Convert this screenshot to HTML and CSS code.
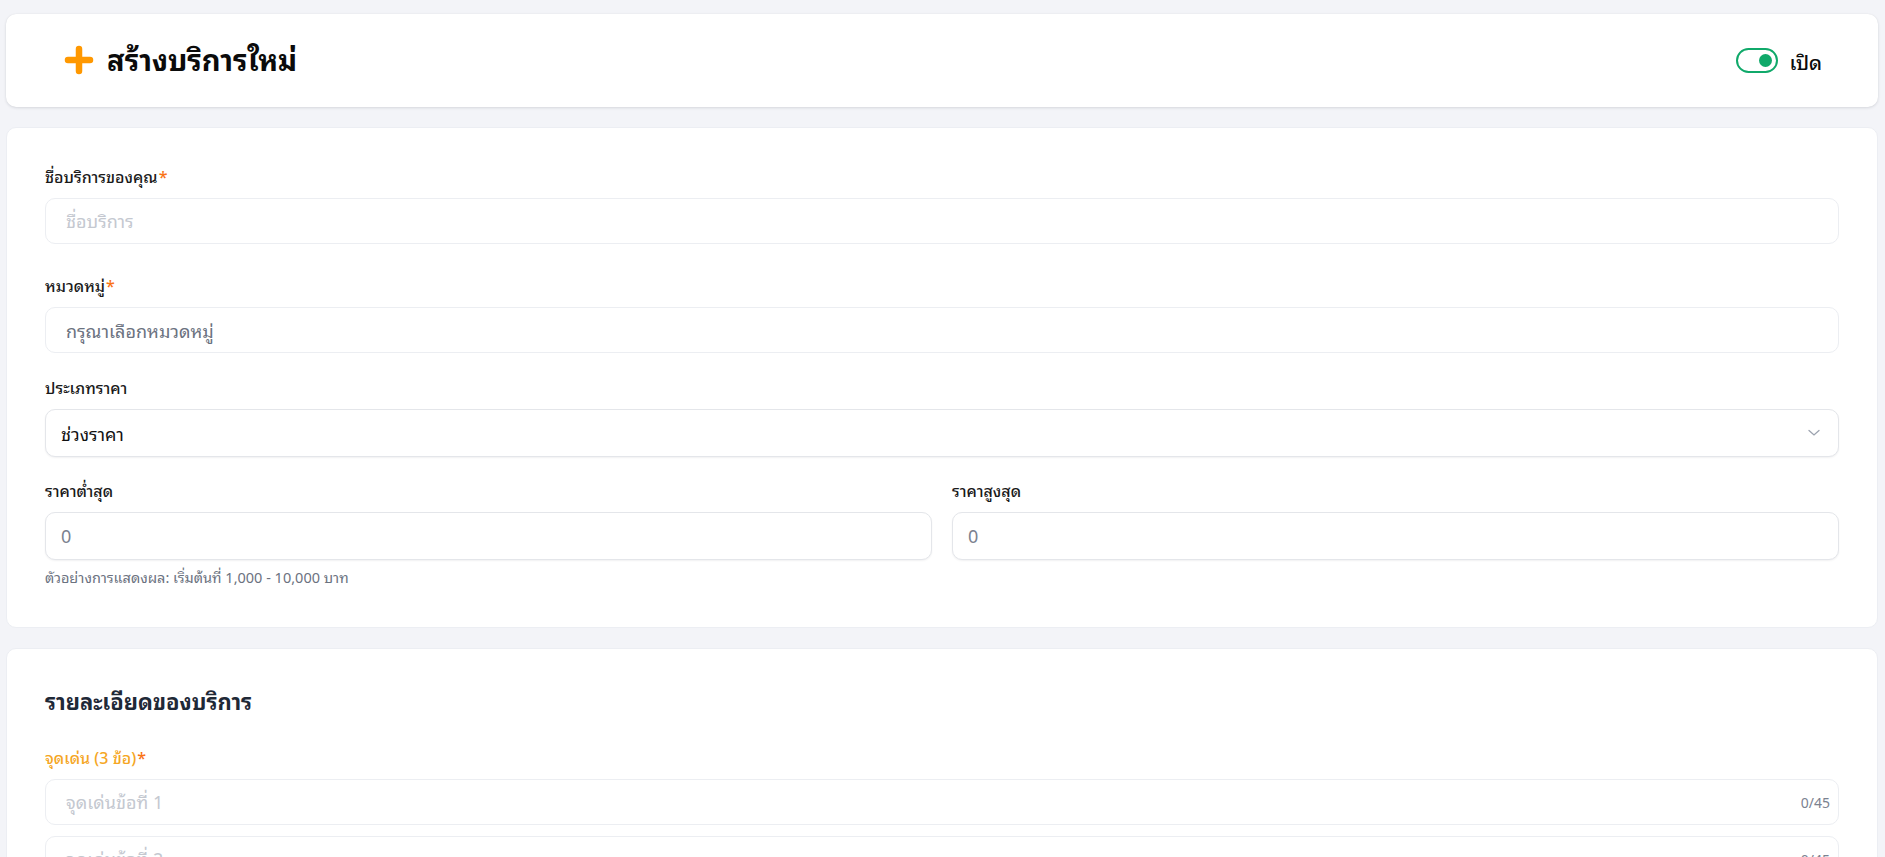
FILE: index.html
```html
<!DOCTYPE html>
<html lang="th">
<head>
  <meta charset="UTF-8">
  <meta name="viewport" content="width=device-width, initial-scale=1.0">
  <title>สร้างบริการใหม่</title>
  <link rel="stylesheet" href="styles.css">
</head>
<body>
  <div class="page">
    <header class="card headerCard">
      <div class="headerTitle">
        <svg class="plusIcon" viewBox="0 0 30 30" aria-hidden="true">
          <path d="M15 4v22M4 15h22" stroke="#ff9800" stroke-width="6.5" stroke-linecap="round" fill="none"/>
        </svg>
        <h1>สร้างบริการใหม่</h1>
      </div>
      <label class="statusToggle">
        <span class="switch"><span class="knob"></span></span>
        <span class="statusText">เปิด</span>
      </label>
    </header>

    <section class="card formCard">
      <div class="field nameField">
        <label class="fieldLabel">ชื่อบริการของคุณ<span class="req">*</span></label>
        <input class="textInput" type="text" placeholder="ชื่อบริการ">
      </div>

      <div class="field categoryField">
        <label class="fieldLabel">หมวดหมู่<span class="req">*</span></label>
        <div class="textInput pickInput">กรุณาเลือกหมวดหมู่</div>
      </div>

      <div class="field typeField">
        <label class="fieldLabel">ประเภทราคา</label>
        <div class="selectBox">
          <span>ช่วงราคา</span>
          <svg class="chevron" viewBox="0 0 12 8" aria-hidden="true">
            <path d="M1 1.5l5 4.5 5-4.5" stroke="#9ca3af" stroke-width="1.3" fill="none" stroke-linecap="round"/>
          </svg>
        </div>
      </div>

      <div class="priceRow">
        <div class="field">
          <label class="fieldLabel">ราคาต่ำสุด</label>
          <input class="priceInput" type="text" value="0">
        </div>
        <div class="field">
          <label class="fieldLabel">ราคาสูงสุด</label>
          <input class="priceInput" type="text" value="0">
        </div>
      </div>
      <p class="helpText">ตัวอย่างการแสดงผล: เริ่มต้นที่ 1,000 - 10,000 บาท</p>
    </section>

    <section class="card formCard detailCard">
      <h2 class="sectionTitle">รายละเอียดของบริการ</h2>
      <div class="field">
        <label class="fieldLabel highlightLabel">จุดเด่น (3 ข้อ)<span class="req">*</span></label>
        <div class="countInput">
          <input class="textInput" type="text" placeholder="จุดเด่นข้อที่ 1">
          <span class="counter">0/45</span>
        </div>
        <div class="countInput">
          <input class="textInput" type="text" placeholder="จุดเด่นข้อที่ 2">
          <span class="counter">0/45</span>
        </div>
        <div class="countInput">
          <input class="textInput" type="text" placeholder="จุดเด่นข้อที่ 3">
          <span class="counter">0/45</span>
        </div>
      </div>
    </section>
  </div>
</body>
</html>
```

FILE: styles.css
```css
* {
  box-sizing: border-box;
  margin: 0;
  padding: 0;
}
body {
  background-color: #f3f4f8;
  font-family: "Noto Sans", "Noto Sans Thai Looped", "Loma", "Garuda", "Noto Sans Thai", Inter, sans-serif;
  color: #1f2937;
  height: 100vh;
  overflow: hidden;
}

.page {
  padding: 14px 7px 0 6px;
  display: flex;
  flex-direction: column;
  gap: 20px;
}
.card {
  background: #ffffff;
  border-radius: 10px;
}

/* header */
.headerCard {
  height: 93px;
  display: flex;
  align-items: center;
  justify-content: space-between;
  padding: 0 56px 0 58px;
  box-shadow: 0 1px 3px rgba(15, 23, 42, 0.12), 0 0 1px rgba(15, 23, 42, 0.08);
}
.headerTitle {
  display: flex;
  align-items: center;
  gap: 13px;
}
.plusIcon {
  width: 30px;
  height: 30px;
}
.headerTitle h1 {
  font-size: 29px;
  font-weight: 700;
  color: #0b0b0b;
  line-height: 1.2;
}
.statusToggle {
  display: flex;
  align-items: center;
  gap: 11px;
  cursor: pointer;
}
.switch {
  width: 42px;
  height: 25px;
  border: 2.5px solid #10a96a;
  border-radius: 13px;
  display: flex;
  align-items: center;
  justify-content: flex-end;
  padding-right: 4px;
}
.knob {
  width: 13px;
  height: 13px;
  border-radius: 50%;
  background: #10a96a;
}
.statusText {
  font-size: 20px;
  font-weight: 500;
  color: #0b0b0b;
}

/* form cards */
.formCard {
  border: 1px solid #eceef3;
  padding: 37px 38px 40px;
}
.field {
  display: flex;
  flex-direction: column;
}
.categoryField {
  margin-top: 30px;
}
.typeField {
  margin-top: 23px;
}
.priceRow {
  margin-top: 22px;
  display: grid;
  grid-template-columns: 1fr 1fr;
  gap: 20px;
}
.fieldLabel {
  font-size: 16px;
  font-weight: 500;
  line-height: 24px;
  color: #1a1a1a;
  margin-bottom: 9px;
}
.req {
  color: #f97316;
  margin-left: 1px;
}
.textInput {
  width: 100%;
  height: 46px;
  border: 1px solid #eceef2;
  border-radius: 10px;
  padding: 0 20px;
  font: inherit;
  font-size: 18px;
  color: #1f2937;
  background: #fff;
  outline: none;
}
.textInput::placeholder {
  color: #c4c8d0;
}
.pickInput {
  display: flex;
  align-items: center;
  color: #6b7280;
}
.selectBox,
.priceInput {
  width: 100%;
  height: 48px;
  border: 1px solid #e4e6ea;
  border-radius: 10px;
  box-shadow: 0 1px 2px rgba(15, 23, 42, 0.06);
  padding: 0 15px;
  font: inherit;
  font-size: 18px;
  background: #fff;
}
.selectBox {
  display: flex;
  align-items: center;
  justify-content: space-between;
  color: #111;
  padding-right: 18px;
}
.chevron {
  width: 12px;
  height: 8px;
}
.priceInput {
  color: #7b8290;
  outline: none;
}
.helpText {
  margin-top: 7px;
  font-size: 14.5px;
  color: #6b7280;
  line-height: 20px;
}

/* detail card */
.detailCard {
  padding-top: 37px;
}
.sectionTitle {
  font-size: 22px;
  font-weight: 700;
  color: #1f2937;
  line-height: 30px;
  margin-bottom: 30px;
}
.highlightLabel {
  color: #f5a623;
}
.countInput {
  position: relative;
}
.countInput + .countInput {
  margin-top: 11px;
}
.countInput .textInput {
  padding-right: 60px;
}
.counter {
  position: absolute;
  right: 9px;
  top: 50%;
  transform: translateY(-50%);
  font-size: 14px;
  color: #7b8290;
}
```
